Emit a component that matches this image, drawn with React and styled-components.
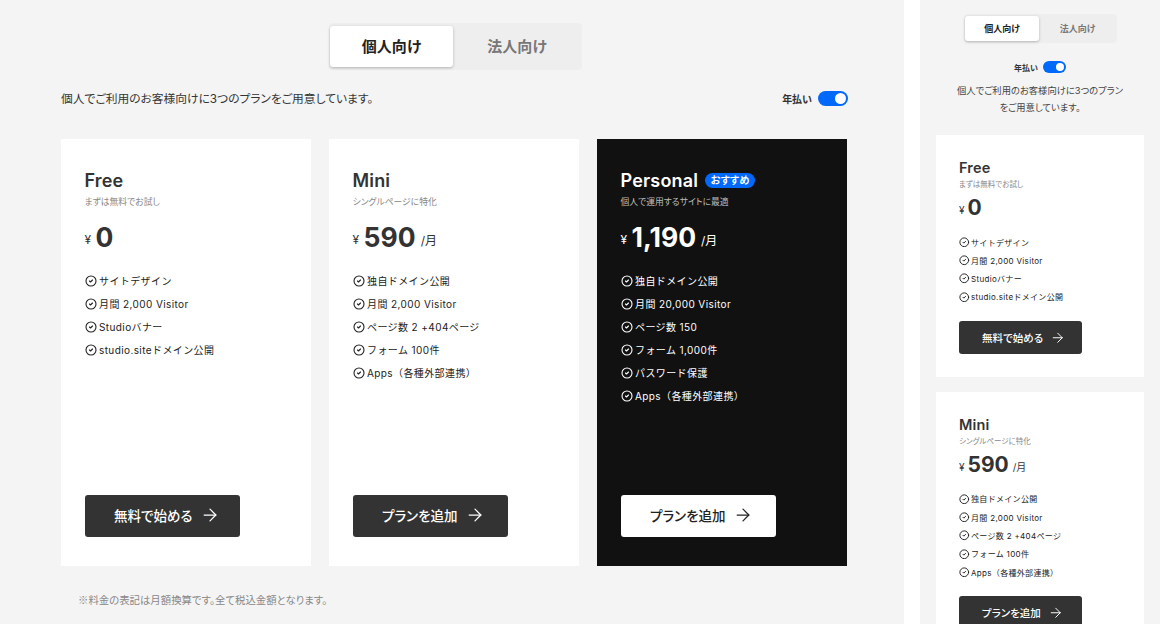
import React from 'react'
import styled, { createGlobalStyle } from 'styled-components'
import { ArrowRight, CircleCheck } from 'lucide-react'

const Global = createGlobalStyle`
  html, body {
    margin: 0;
    padding: 0;
    background: #fff;
  }
  body {
    font-family: Inter, "Noto Sans CJK JP", sans-serif;
    color: #333;
    font-feature-settings: "palt";
    overflow: hidden;
  }
  * {
    box-sizing: border-box;
  }
`

const Page = styled.div`
  display: flex;
  gap: 16px;
  width: 1160px;
  height: 624px;
  overflow: hidden;
`

const Main = styled.main`
  flex: none;
  width: 904px;
  padding: 23px 56px 0 61px;
  background: #f4f4f4;
`

const Side = styled.aside`
  flex: none;
  width: 240px;
  padding: 14px 16px 0;
  background: #f4f4f4;
`

const Tabs = styled.div`
  display: flex;
  width: ${p => (p.$small ? 153 : 253)}px;
  height: ${p => (p.$small ? 29 : 47)}px;
  margin: ${p => (p.$small ? '0 auto 0 28px' : '0 0 0 268px')};
  padding: ${p => (p.$small ? '2px 1px' : '3px 1px')};
  border-radius: 4px;
  background: #eee;
`

const Tab = styled.div`
  display: flex;
  flex: ${p => (p.$active ? 'none' : 1)};
  align-items: center;
  justify-content: center;
  width: ${p => (p.$small ? 74 : 123)}px;
  padding-bottom: ${p => (p.$small ? 0 : 2)}px;
  border-radius: 3px;
  font-size: ${p => (p.$small ? 9 : 15)}px;
  font-weight: 700;
  color: ${p => (p.$active ? '#222' : '#777')};
  background: ${p => (p.$active ? '#fff' : 'transparent')};
  box-shadow: ${p => (p.$active ? '0 1px 3px rgba(0, 0, 0, 0.25)' : 'none')};
`

const Intro = styled.div`
  display: flex;
  align-items: center;
  justify-content: space-between;
  height: 18px;
  margin: 19px 0 32px;
  font-size: 11.75px;
`

const IntroText = styled.span`
  margin-top: -2px;
`

const Billing = styled.div`
  display: flex;
  align-items: center;
  justify-content: ${p => (p.$small ? 'center' : 'flex-start')};
  gap: ${p => (p.$small ? 5 : 6)}px;
  margin-top: ${p => (p.$small ? '18px' : '0')};
  font-size: ${p => (p.$small ? 8 : 10)}px;
  font-weight: 700;
`

const Toggle = styled.span`
  position: relative;
  display: block;
  width: ${p => (p.$small ? 23 : 30)}px;
  height: ${p => (p.$small ? 12 : 15)}px;
  border-radius: 8px;
  background: #0069fa;

  &::after {
    content: '';
    position: absolute;
    top: 2px;
    right: 2px;
    width: ${p => (p.$small ? 8 : 11)}px;
    height: ${p => (p.$small ? 8 : 11)}px;
    border-radius: 50%;
    background: #fff;
  }
`

const SideText = styled.p`
  margin: 9px 0 19px;
  font-size: 9.3px;
  line-height: 17px;
  text-align: center;
  color: #444;
`

const Cards = styled.div`
  display: grid;
  grid-template-columns: repeat(3, 250px);
  gap: 18px;
`

const Card = styled.section`
  display: flex;
  flex-direction: column;
  height: ${p => (p.$small ? 'auto' : '427px')};
  margin-bottom: ${p => (p.$small ? '15px' : '0')};
  padding: ${p => (p.$small ? '24px 23px 23px' : '31px 23.5px 29px')};
  background: ${p => (p.$dark ? '#111' : '#fff')};
  color: ${p => (p.$dark ? '#fff' : '#333')};
`

const TitleRow = styled.div`
  display: flex;
  align-items: center;
  gap: 7px;
`

const Title = styled.h2`
  margin: 0;
  font-size: ${p => (p.$small ? 14.5 : 18)}px;
  line-height: ${p => (p.$small ? 18 : 21)}px;
  font-weight: 600;
  letter-spacing: 0.01em;
`

const Badge = styled.span`
  padding: 0 5.5px;
  border-radius: 8px;
  background: #0069fa;
  color: #fff;
  font-size: 10px;
  line-height: 15px;
  font-weight: 700;
  letter-spacing: 0.04em;
`

const Sub = styled.p`
  margin: ${p => (p.$small ? '1px 0 0' : '4px 0 0')};
  font-size: ${p => (p.$small ? 7.5 : 8.8)}px;
  line-height: ${p => (p.$small ? 13 : 14)}px;
  color: ${p => (p.$dark ? '#bbb' : '#888')};
`

const Price = styled.div`
  display: flex;
  align-items: center;
  margin-top: ${p => (p.$small ? '2px' : '9px')};
  height: ${p => (p.$small ? '30px' : '38px')};
`

const Yen = styled.span`
  margin: ${p => (p.$small ? '4px 3px 0 0' : '4px 4.5px 0 0')};
  font-size: ${p => (p.$small ? 10 : 12)}px;
`

const Amount = styled.span`
  font-size: ${p => (p.$small ? 21 : 26.5)}px;
  line-height: ${p => (p.$small ? 30 : 38)}px;
  font-weight: 700;
`

const Per = styled.span`
  margin: ${p => (p.$small ? '4px 0 0 4px' : '4px 0 0 5px')};
  font-size: ${p => (p.$small ? 10 : 12)}px;
`

const Features = styled.ul`
  display: flex;
  flex-direction: column;
  gap: ${p => (p.$small ? 5.3 : 8)}px;
  margin: ${p => (p.$small ? '12.5px 0 0' : '17px 0 0')};
  padding: 0;
  list-style: none;
  color: ${p => (p.$dark ? '#fff' : '#222')};
`

const Feature = styled.li`
  display: flex;
  align-items: center;
  gap: ${p => (p.$small ? 1.5 : 2.5)}px;
  height: ${p => (p.$small ? 13 : 15)}px;
  font-size: ${p => (p.$small ? 8 : 10)}px;
  letter-spacing: 0.04em;
  font-feature-settings: normal;

  svg {
    flex: none;
    width: ${p => (p.$small ? 10.5 : 12)}px;
    height: ${p => (p.$small ? 10.5 : 12)}px;
  }
`

const Cta = styled.div`
  display: flex;
  flex: none;
  align-items: center;
  gap: ${p => (p.$small ? 7 : 7)}px;
  width: ${p => (p.$small ? 123 : 155)}px;
  height: ${p => (p.$small ? 33 : 42)}px;
  margin-top: ${p => (p.$small ? '17.5px' : 'auto')};
  padding-left: ${p => (p.$small ? 23 : 29.5)}px;
  padding-bottom: ${p => (p.$small ? 0 : 2)}px;
  border-radius: 3px;
  background: ${p => (p.$dark ? '#fff' : '#333')};
  color: ${p => (p.$dark ? '#222' : '#fff')};
  font-size: ${p => (p.$small ? 10.5 : 13.5)}px;
  font-weight: 500;

  svg {
    width: ${p => (p.$small ? 15.5 : 20)}px;
    height: ${p => (p.$small ? 15.5 : 20)}px;
  }
`

const Note = styled.p`
  margin: 27px 0 0 17px;
  font-family: "Noto Sans CJK JP", sans-serif;
  font-size: 10.4px;
  line-height: 14px;
  color: #888;
`

const plans = [
  {
    name: 'Free',
    sub: 'まずは無料でお試し',
    price: '0',
    cta: '無料で始める',
    features: ['サイトデザイン', '月間 2,000 Visitor', 'Studioバナー', 'studio.siteドメイン公開'],
  },
  {
    name: 'Mini',
    sub: 'シングルページに特化',
    price: '590',
    per: true,
    cta: 'プランを追加',
    features: ['独自ドメイン公開', '月間 2,000 Visitor', 'ページ数 2 +404ページ', 'フォーム 100件', 'Apps（各種外部連携）'],
  },
  {
    name: 'Personal',
    badge: 'おすすめ',
    dark: true,
    sub: '個人で運用するサイトに最適',
    price: '1,190',
    per: true,
    cta: 'プランを追加',
    features: ['独自ドメイン公開', '月間 20,000 Visitor', 'ページ数 150', 'フォーム 1,000件', 'パスワード保護', 'Apps（各種外部連携）'],
  },
]

function Plan({ plan, small }) {
  return (
    <Card $small={small} $dark={plan.dark}>
      <TitleRow>
        <Title $small={small}>{plan.name}</Title>
        {plan.badge && <Badge>{plan.badge}</Badge>}
      </TitleRow>
      <Sub $small={small} $dark={plan.dark}>{plan.sub}</Sub>
      <Price $small={small}>
        <Yen $small={small}>¥</Yen>
        <Amount $small={small}>{plan.price}</Amount>
        {plan.per && <Per $small={small}>/月</Per>}
      </Price>
      <Features $small={small} $dark={plan.dark}>
        {plan.features.map(f => (
          <Feature key={f} $small={small}>
            <CircleCheck strokeWidth={2.2} />
            {f}
          </Feature>
        ))}
      </Features>
      <Cta $small={small} $dark={plan.dark}>
        {plan.cta}
        <ArrowRight strokeWidth={1.5} />
      </Cta>
    </Card>
  )
}

export default function App() {
  return (
    <Page>
      <Global />
      <Main>
        <Tabs>
          <Tab $active>個人向け</Tab>
          <Tab>法人向け</Tab>
        </Tabs>
        <Intro>
          <IntroText>個人でご利用のお客様向けに3つのプランをご用意しています。</IntroText>
          <Billing>
            年払い
            <Toggle />
          </Billing>
        </Intro>
        <Cards>
          {plans.map(p => <Plan key={p.name} plan={p} />)}
        </Cards>
        <Note>※料金の表記は月額換算です。全て税込金額となります。</Note>
      </Main>
      <Side>
        <Tabs $small>
          <Tab $small $active>個人向け</Tab>
          <Tab $small>法人向け</Tab>
        </Tabs>
        <Billing $small>
          年払い
          <Toggle $small />
        </Billing>
        <SideText>
          個人でご利用のお客様向けに3つのプラン
          <br />
          をご用意しています。
        </SideText>
        {plans.slice(0, 2).map(p => <Plan key={p.name} plan={p} small />)}
      </Side>
    </Page>
  )
}
